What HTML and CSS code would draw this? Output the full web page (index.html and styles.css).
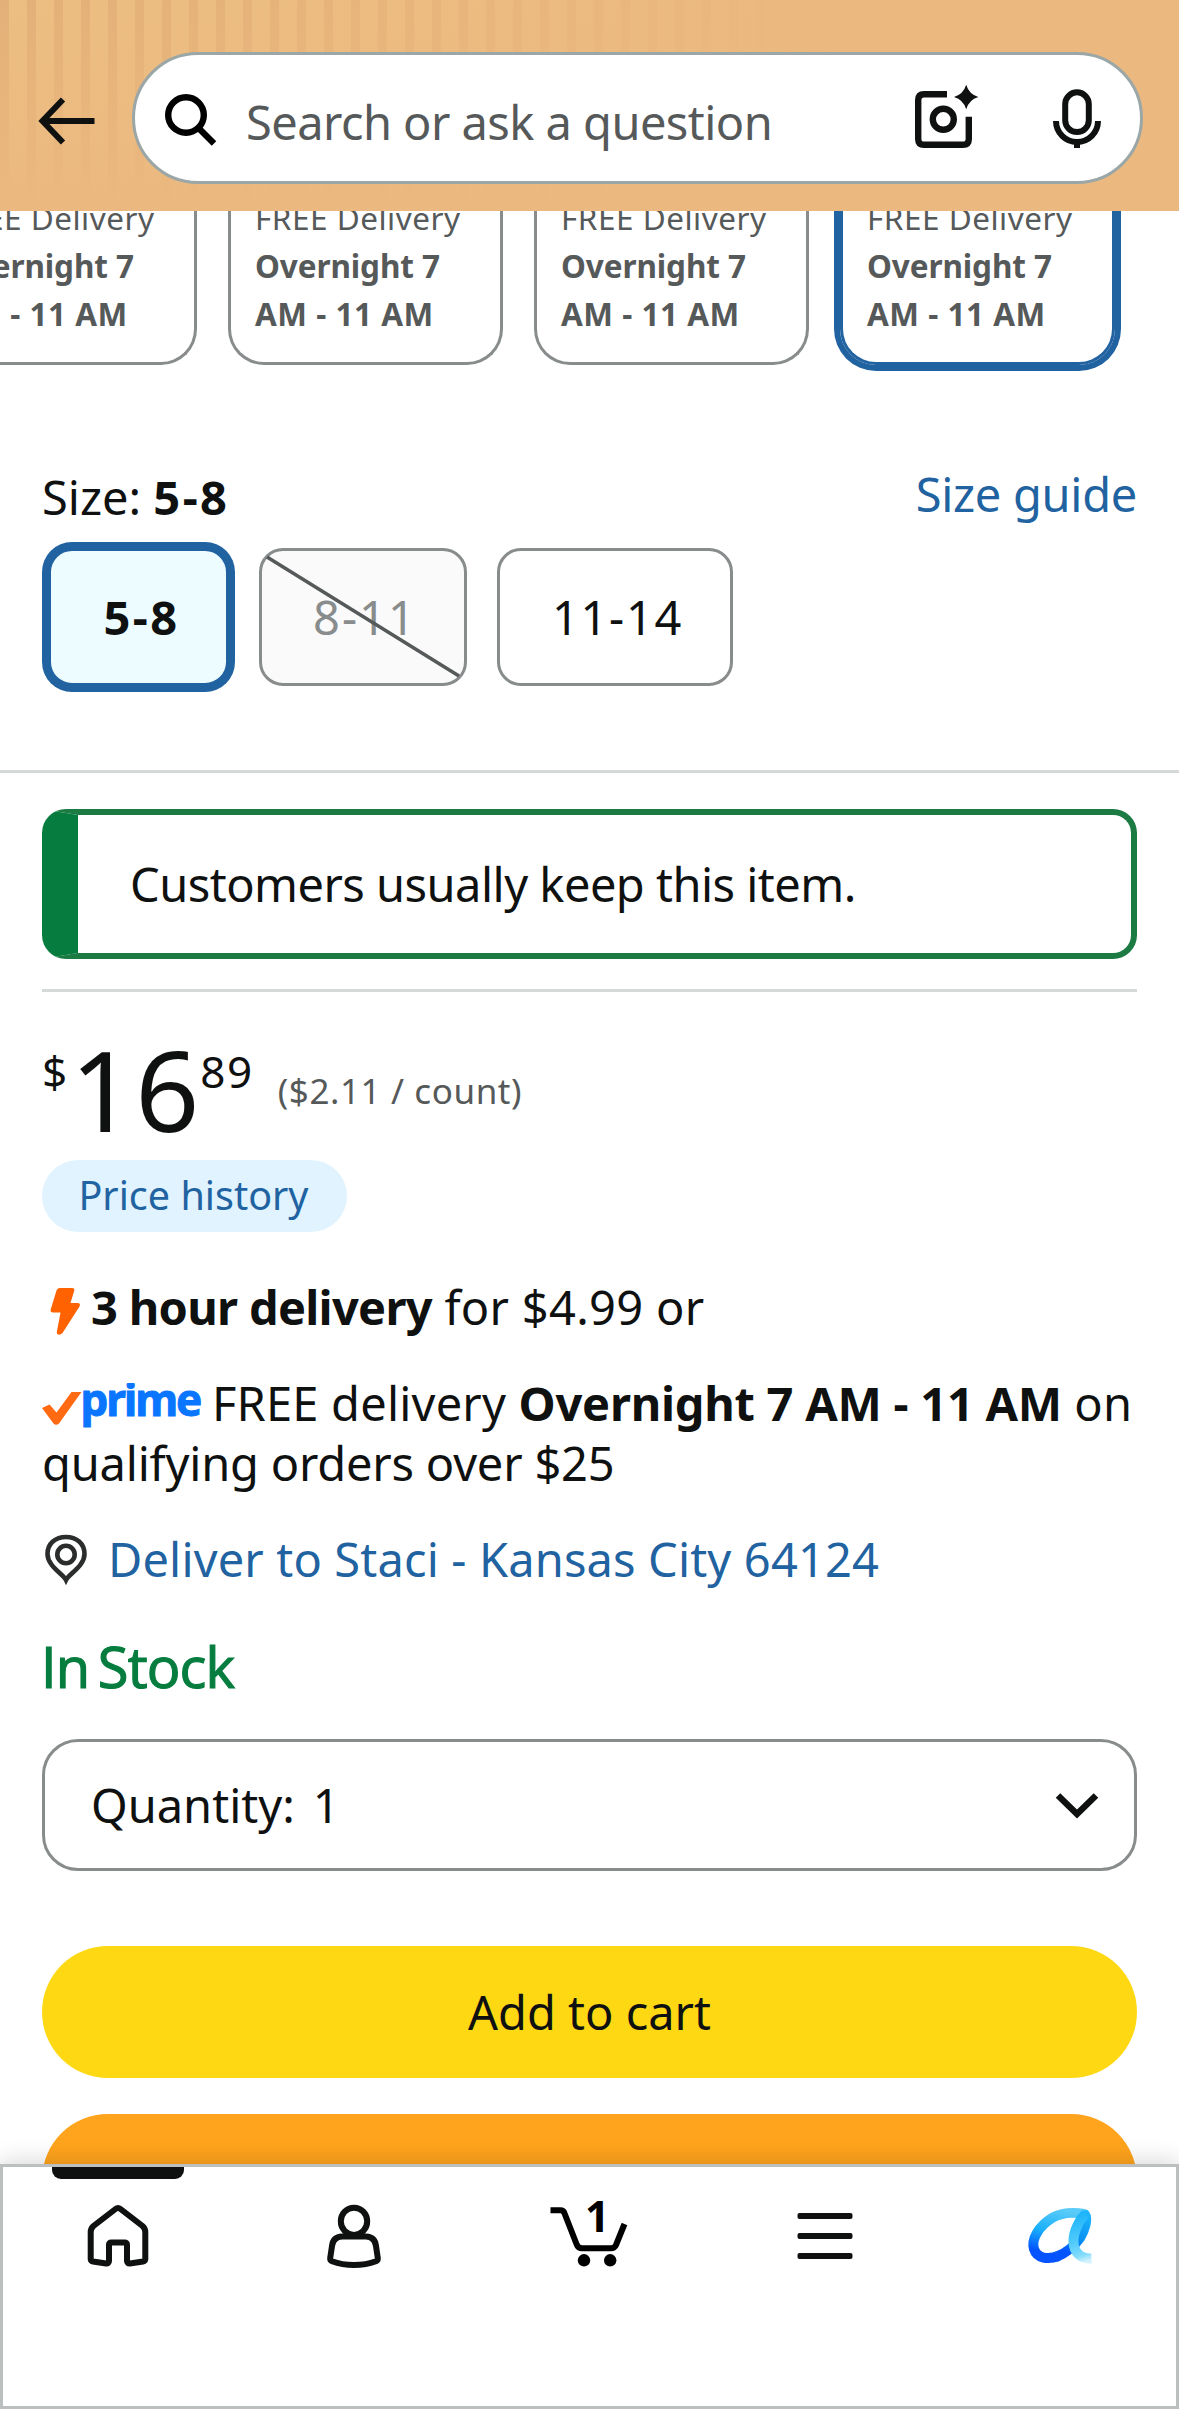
FILE: index.html
```html
<!DOCTYPE html>
<html lang="en">
<head>
<meta charset="utf-8">
<title>Product details</title>
<link rel="stylesheet" href="styles.css">
</head>
<body>
<header class="topbar">
  <svg class="back" viewBox="0 0 66 66" fill="none" stroke="#0f1111" stroke-width="6"><path d="M58.500 36H7M27 14.500L6.500 36L27 57.500"/></svg>
  <div class="search">
    <svg class="search-icon" viewBox="0 0 60 60" fill="none" stroke="#000" stroke-width="6.400"><circle cx="24" cy="27" r="17.800"/><path d="M36.500 40L52 55.500"/></svg>
    <span class="placeholder">Search or ask a question</span>
    <svg class="tool-icon" viewBox="0 0 72 72" fill="none" stroke="#0f1111" stroke-width="6.400"><path d="M38 12.200H15Q9.200 12.200 9.200 18V57Q9.200 62.800 15 62.800H54Q59.800 62.800 59.800 57V34.700"/><circle cx="34.300" cy="37.300" r="10.500"/><path fill="#0f1111" stroke="none" d="M57.200 2.800Q60 12.200 69.300 15Q60 17.800 57.200 27.200Q54.400 17.800 45 15Q54.400 12.200 57.200 2.800Z"/></svg>
    <svg class="tool-icon" viewBox="0 0 72 72" fill="none" stroke="#0f1111" stroke-width="6"><rect x="24.200" y="10.300" width="23.600" height="39.700" rx="11.800"/><path d="M15 39A21 21 0 0 0 57 39M36 60V66"/></svg>
  </div>
</header>

<main class="content">
  <section class="offers">
    <div class="offer"><span>FREE Delivery</span><b class="tight">Overnight 7</b><b>AM - 11 AM</b></div>
    <div class="offer"><span>FREE Delivery</span><b class="tight">Overnight 7</b><b>AM - 11 AM</b></div>
    <div class="offer"><span>FREE Delivery</span><b class="tight">Overnight 7</b><b>AM - 11 AM</b></div>
    <div class="offer offer-selected"><span>FREE Delivery</span><b class="tight">Overnight 7</b><b>AM - 11 AM</b></div>
  </section>

  <section class="size-head">
    <div class="size-label">Size: <b>5-8</b></div>
    <a class="link">Size guide</a>
  </section>
  <section class="sizes">
    <div class="size size-selected">5-8</div>
    <div class="size size-unavailable">8-11<svg class="strike" viewBox="0 0 202 132" preserveAspectRatio="none"><path d="M5 6L197 125" stroke="#565959" stroke-width="3.500"/></svg></div>
    <div class="size size-wide">11-14</div>
  </section>

  <hr class="rule">

  <div class="buybox">
    <div class="notice">Customers usually keep this item.</div>
    <hr class="rule rule-inner">
    <div class="price">
      <span class="price-sup">$</span><span class="price-whole">16</span><span class="price-sup price-cents">89</span>
      <span class="unit">($2.11 / count)</span>
    </div>
    <div class="history">Price history</div>

    <p class="line fast">
      <svg class="bolt" viewBox="0 0 48 60"><path d="M17.500 11H30Q33 11 32.300 13.500L28.500 26H35.500Q39 26.300 37.500 29.500L20.500 56Q17.500 59 15.200 57Q14.500 56 15 54L18.500 35.500H11Q8 35.500 8.700 32.500L14.500 13.500Q15.300 11 17.500 11Z" fill="#ff6200"/></svg><span><b>3 hour delivery</b> for $4.99 or</span>
    </p>
    <p class="line prime-line">
      <svg class="prime" viewBox="0 0 170 50"><path d="M0 25L7.500 21.500L14.500 29.500L29.500 9H39.500L17 40.500Q14 43 11.500 40.500Z" fill="#ff6a13"/><text class="prime-word" x="38.500" y="33" textLength="122">prime</text></svg>FREE delivery <b>Overnight 7 AM - 11 AM</b> on <span class="nowrap">qualifying orders over $25</span>
    </p>
    <p class="line deliver">
      <svg class="pin" viewBox="0 0 48 60" fill="none" stroke="#2b2d2d" stroke-width="4.600"><path d="M24 51C21 45 5.500 37 5.500 25C5.500 14.500 13.500 8 24 8S42.500 14.500 42.500 25C42.500 37 27 45 24 51Z"/><circle cx="24" cy="25.500" r="8.700"/></svg>
      <a class="link">Deliver to Staci - Kansas City 64124</a>
    </p>
    <p class="stock">In Stock</p>

    <div class="quantity">
      <span>Quantity:</span><span class="amount">1</span>
      <svg class="chevron" viewBox="0 0 48 36" fill="none" stroke="#0f1111" stroke-width="6.500"><path d="M5 8.500L24 27L43 8.500"/></svg>
    </div>
    <div class="button button-cart">Add to cart</div>
    <div class="button button-buy"></div>
  </div>
</main>

<nav class="tabs">
  <div class="tab tab-active">
    <svg viewBox="0 0 96 80" fill="none" stroke="#0f1111" stroke-width="6"><path d="M45.500 13Q48 11 50.500 13L72.500 30Q75.300 32.500 75.300 36V63Q75.300 65 73 65.500L60 67.500Q57 67.700 57 65V49Q57 46.500 54.500 46.500H41.500Q39 46.500 39 49V65Q39 67.700 36 67.500L23 65.500Q20.700 65 20.700 63V36Q20.700 32.500 23.500 30Z"/></svg>
  </div>
  <div class="tab">
    <svg viewBox="0 0 96 80" fill="none" stroke="#0f1111" stroke-width="6"><ellipse cx="48" cy="25.300" rx="13.200" ry="13.600"/><path d="M36 40.500H60Q69 41 70 50L71.800 62Q72 64.500 70 65.300Q60 69 48 69T26 65.300Q24 64.500 24.200 62L26 50Q27 41 36 40.500Z"/></svg>
  </div>
  <div class="tab">
    <svg viewBox="0 0 96 80" fill="none" stroke="#000" stroke-width="6"><path d="M9.500 14.300H19.500Q22.500 14.300 23.500 17.300L35.500 48Q37 52.300 41 52.300H70Q73.500 52.300 75 49L83.500 28"/><circle cx="43" cy="64.300" r="6.200" fill="#000" stroke="none"/><circle cx="69.200" cy="64.300" r="6.200" fill="#000" stroke="none"/><text class="cart-count" x="44" y="36.300">1</text></svg>
  </div>
  <div class="tab">
    <svg viewBox="0 0 96 80" fill="#0f1111"><rect x="20.500" y="17" width="55" height="6" rx="2"/><rect x="20.500" y="37" width="55" height="6" rx="2"/><rect x="20.500" y="57" width="55" height="6" rx="2"/></svg>
  </div>
  <div class="tab">
    <svg viewBox="0 0 96 80" fill="none" stroke-width="10">
      <defs>
        <linearGradient id="loop" gradientUnits="userSpaceOnUse" x1="50" y1="14" x2="38" y2="66"><stop offset="0" stop-color="#5acbf8"/><stop offset=".45" stop-color="#19b0fb"/><stop offset=".85" stop-color="#0453ff"/></linearGradient>
        <linearGradient id="stem" gradientUnits="userSpaceOnUse" x1="72" y1="18" x2="54" y2="56"><stop offset="0" stop-color="#1db4fa"/><stop offset=".6" stop-color="#0790f3"/><stop offset="1" stop-color="#0453ff"/></linearGradient>
        <linearGradient id="tail" gradientUnits="userSpaceOnUse" x1="66" y1="18" x2="79" y2="64"><stop offset="0" stop-color="#1db4fa"/><stop offset=".6" stop-color="#57cdfb"/><stop offset=".85" stop-color="#84dcfb"/><stop offset="1" stop-color="#d4f3fd"/></linearGradient>
      </defs>
      <path stroke="url(#stem)" stroke-linecap="round" d="M72 18.500C75 23 72 34 67 42C60 52 53 57 44 60.500"/>
      <path stroke="url(#loop)" d="M71 18C61 16 48 16.500 39 22C26 30 18 43 21 53C24 62.500 35 64 45.500 60"/>
      <path stroke="url(#tail)" stroke-linejoin="round" d="M73 18C68 21 60 35 60.500 46C61 57 68 63 78.500 62.500"/>
    </svg>
  </div>
</nav>
</body>
</html>
```
FILE: styles.css
```css
* { box-sizing: border-box; }

body {
  margin: 0;
  height: 2409px;
  display: flex;
  flex-direction: column;
  overflow: hidden;
  background: #fff;
  color: #0f1111;
  font-family: "Noto Sans", sans-serif;
  font-size: 47px;
  line-height: 60px;
}

svg { display: block; flex: none; }
p { margin: 0; }

/* Header */
.topbar {
  flex: none;
  height: 211px;
  padding: 52px 36px 27px;
  display: flex;
  align-items: center;
  gap: 30px;
  background:
    linear-gradient(to right, rgba(235, 185, 128, 0), #ebb980 850px),
    linear-gradient(to bottom, rgba(235, 185, 128, 0), #ebb980 205px),
    repeating-linear-gradient(to right, #e4b079 0 9px, #ecbe82 9px 27px);
}
.back { width: 66px; height: 66px; }
.search {
  flex: 1;
  height: 132px;
  display: flex;
  align-items: center;
  padding: 0 27px;
  border: 3px solid #9ba7a7;
  border-radius: 66px;
  background: #fff;
}
.search-icon { width: 60px; height: 60px; }
.placeholder {
  flex: 1;
  padding: 8px 0 0 24px;
  color: #565959;
  letter-spacing: -.55px;
}
.tool-icon { width: 72px; height: 72px; }
.tool-icon + .tool-icon { margin-left: 60px; }

.content { flex: 1; min-height: 0; overflow: hidden; }

/* Offer cards, scrolled partly under the header */
.offers {
  display: flex;
  gap: 31px;
  margin: -17px 0 0 -78px;
}
.offer {
  flex: none;
  width: 275px;
  height: 171px;
  padding: 0 0 0 24px;
  border: 3px solid #888c8c;
  border-top: 0;
  border-radius: 0 0 36px 36px;
  color: #565959;
  font-size: 31.5px;
  line-height: 48px;
  letter-spacing: .5px;
}
.offer > * { display: block; white-space: nowrap; }
.offer .tight { letter-spacing: -.1px; }
.offer-selected {
  border-color: #2162a1;
  box-shadow: 0 0 0 6px #2162a1;
}

/* Sizes */
.size-head {
  display: flex;
  justify-content: space-between;
  align-items: flex-start;
  margin: 99px 42px 0;
}
.size-label { padding-top: 3px; }
.size-label b { letter-spacing: 2.4px; }
.size-head .link { letter-spacing: -.3px; }
.link { color: #2162a1; }
.sizes {
  display: flex;
  gap: 30px;
  margin: 21px 0 84px 48px;
}
.size {
  position: relative;
  width: 208px;
  height: 138px;
  display: flex;
  align-items: center;
  justify-content: center;
  border: 3px solid #888c8c;
  border-radius: 24px;
}
.size-selected {
  width: 181px;
  padding-left: 6px;
  border-color: #2162a1;
  box-shadow: 0 0 0 6px #2162a1;
  background: #edfdff;
  font-weight: 700;
  letter-spacing: 2.4px;
}
.size-unavailable {
  padding-left: 4px;
  background: #fafafa;
  color: #888c8c;
  letter-spacing: 2px;
}
.size-wide { width: 236px; padding-left: 5px; letter-spacing: 1.7px; }
.strike { position: absolute; inset: 0; width: 100%; height: 100%; }

.rule { height: 3px; margin: 0; border: 0; background: #d5d9d9; }

/* Buy box */
.buybox { padding: 36px 42px 0; }
.notice {
  height: 150px;
  padding-left: 52px;
  border: 6px solid #1b7b42;
  border-left: 36px solid #067d3f;
  border-radius: 24px;
  line-height: 138px;
  letter-spacing: -.52px;
}
.rule-inner { margin: 30px 0 43px; }

.price { display: flex; align-items: flex-start; height: 110px; }
.price-sup { margin-top: 14px; font-size: 44px; line-height: 44px; }
.price-whole {
  margin-left: 3px;
  font-size: 112px;
  line-height: 108px;
  letter-spacing: 1px;
}
.price-cents { letter-spacing: 1.5px; }
.unit {
  margin: 36px 0 0 24px;
  color: #565959;
  font-size: 35px;
  line-height: 40px;
  letter-spacing: .6px;
}
.history {
  width: 305px;
  height: 72px;
  margin-top: 15px;
  padding-right: 2px;
  border-radius: 36px;
  background: #e0f3ff;
  color: #2162a1;
  font-size: 39.5px;
  line-height: 71px;
  text-align: center;
}

.line { margin-top: 36px; }
.fast { display: flex; margin-top: 45px; letter-spacing: .3px; }
.fast span { margin-left: 1px; }
.fast b { letter-spacing: -.7px; }
.bolt { width: 48px; height: 60px; }
.prime-line { letter-spacing: .2px; }
.prime-line b { letter-spacing: -.25px; }
.nowrap { white-space: nowrap; letter-spacing: -.2px; }
.prime { display: inline-block; width: 170px; height: 50px; vertical-align: -12px; }
.prime-word {
  fill: #0a76ff;
  stroke: #0a76ff;
  stroke-width: 1px;
  font-size: 44px;
  font-weight: 700;
}
.deliver { display: flex; gap: 18px; letter-spacing: .15px; }
.pin { width: 48px; height: 60px; }
.stock {
  margin: 47px 0 43px -1px;
  color: #067d3f;
  font-family: "Open Sans", sans-serif;
  font-size: 56px;
  letter-spacing: -.9px;
  word-spacing: -5px;
  -webkit-text-stroke: 1.2px #067d3f;
}

.quantity {
  height: 132px;
  display: flex;
  align-items: center;
  padding: 0 33px 0 46px;
  border: 3px solid #888c8c;
  border-radius: 36px;
}
.amount { flex: 1; margin-left: 18px; }
.chevron { width: 48px; height: 36px; }

.button {
  height: 132px;
  border-radius: 66px;
  line-height: 132px;
  text-align: center;
}
.button-cart { margin-top: 75px; background: #ffd814; }
.button-buy { margin-top: 36px; background: #ffa41c; }

/* Bottom navigation */
.tabs {
  position: relative;
  flex: none;
  height: 245px;
  display: grid;
  grid-template-columns: repeat(5, 1fr);
  background: #fff;
  box-shadow: inset 0 0 0 3px #bbbfbf, 0 0 24px rgba(15, 17, 17, .2);
}
.tab {
  display: flex;
  flex-direction: column;
  align-items: center;
  padding-top: 32px;
}
.tab svg { width: 96px; height: 80px; }
.tab-active { padding-top: 3px; }
.tab-active::before {
  content: "";
  width: 132px;
  height: 12px;
  margin-bottom: 17px;
  border-radius: 0 0 9px 9px;
  background: #0f1111;
}
.cart-count { fill: #000; stroke: none; font-size: 43px; font-weight: 700; }
```
